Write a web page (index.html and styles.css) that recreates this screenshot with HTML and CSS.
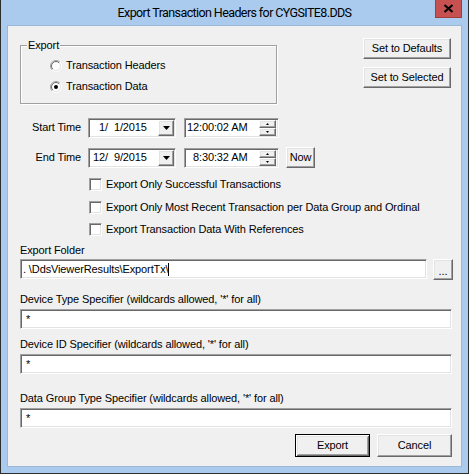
FILE: index.html
```html
<!DOCTYPE html>
<html>
<head>
<meta charset="utf-8">
<link rel="stylesheet" href="styles.css">
</head>
<body>
<div class="window">
  <div class="titlebar">
    <div class="title">Export Transaction Headers for CYGSITE8.DDS</div>
    <div class="close"><svg width="11" height="9" viewBox="0 0 11 9"><path d="M1.5 1 L9.5 8 M9.5 1 L1.5 8" stroke="#000" stroke-width="2.2"/></svg></div>
  </div>
  <div class="client">
    <div class="top">
      <div class="group">
        <span class="legend">Export</span>
        <div class="radio-row">
          <svg class="rb" width="12" height="12" viewBox="0 0 12 12">
            <defs>
              <linearGradient id="go" x1="0" y1="0" x2="1" y2="1"><stop offset="0.5" stop-color="#a0a0a0"/><stop offset="0.5" stop-color="#ffffff"/></linearGradient>
              <linearGradient id="gi" x1="0" y1="0" x2="1" y2="1"><stop offset="0.5" stop-color="#696969"/><stop offset="0.5" stop-color="#e3e3e3"/></linearGradient>
            </defs>
            <circle cx="6" cy="6" r="5.5" fill="none" stroke="url(#go)" stroke-width="1"/>
            <circle cx="6" cy="6" r="4.5" fill="#fff" stroke="url(#gi)" stroke-width="1"/>
          </svg>
          <span>Transaction Headers</span>
        </div>
        <div class="radio-row">
          <svg class="rb" width="12" height="12" viewBox="0 0 12 12">
            <circle cx="6" cy="6" r="5.5" fill="none" stroke="url(#go)" stroke-width="1"/>
            <circle cx="6" cy="6" r="4.5" fill="#fff" stroke="url(#gi)" stroke-width="1"/>
            <circle cx="6" cy="6" r="2" fill="#000"/>
          </svg>
          <span>Transaction Data</span>
        </div>
      </div>
      <div class="side-buttons">
        <div class="btn side-btn">Set to Defaults</div>
        <div class="btn side-btn">Set to Selected</div>
      </div>
    </div>

    <div class="time-row first">
      <div class="row-label">Start Time</div>
      <div class="field date"><span class="val"><span class="f2">1</span>/<span class="f2">1</span>/2015</span><span class="btn drop"><svg width="7" height="4" viewBox="0 0 7 4"><path d="M0 0 H7 L3.5 4 Z" fill="#000"/></svg></span></div>
      <div class="field time"><span class="val"><span class="f2">12</span>:00:02 AM</span><span class="spin"><span class="btn sp"><svg width="3" height="2" viewBox="0 0 3 2"><path d="M1.5 0 L3 2 H0 Z" fill="#000"/></svg></span><span class="btn sp"><svg width="3" height="2" viewBox="0 0 3 2"><path d="M0 0 H3 L1.5 2 Z" fill="#000"/></svg></span></span></div>
    </div>
    <div class="time-row second">
      <div class="row-label">End Time</div>
      <div class="field date"><span class="val"><span class="f2">12</span>/<span class="f2">9</span>/2015</span><span class="btn drop"><svg width="7" height="4" viewBox="0 0 7 4"><path d="M0 0 H7 L3.5 4 Z" fill="#000"/></svg></span></div>
      <div class="field time"><span class="val"><span class="f2">8</span>:30:32 AM</span><span class="spin"><span class="btn sp"><svg width="3" height="2" viewBox="0 0 3 2"><path d="M1.5 0 L3 2 H0 Z" fill="#000"/></svg></span><span class="btn sp"><svg width="3" height="2" viewBox="0 0 3 2"><path d="M0 0 H3 L1.5 2 Z" fill="#000"/></svg></span></span></div>
      <div class="btn now">Now</div>
    </div>

    <div class="checks">
      <div class="check-row"><span class="cb"></span><span>Export Only Successful Transactions</span></div>
      <div class="check-row"><span class="cb"></span><span>Export Only Most Recent Transaction per Data Group and Ordinal</span></div>
      <div class="check-row"><span class="cb"></span><span>Export Transaction Data With References</span></div>
    </div>

    <div class="label lbl-folder">Export Folder</div>
    <div class="folder-row">
      <div class="field text folder"><span>. \DdsViewerResults\ExportTx\</span><span class="caret"></span></div>
      <div class="btn browse">...</div>
    </div>

    <div class="label lbl-spec1">Device Type Specifier (wildcards allowed, '*' for all)</div>
    <div class="field text wide">*</div>

    <div class="label lbl-spec2">Device ID Specifier (wildcards allowed, '*' for all)</div>
    <div class="field text wide">*</div>

    <div class="label lbl-spec3">Data Group Type Specifier (wildcards allowed, '*' for all)</div>
    <div class="field text wide">*</div>

    <div class="actions">
      <div class="btn default">Export</div>
      <div class="btn cancel">Cancel</div>
    </div>
  </div>
</div>
</body>
</html>
```

FILE: styles.css
```css
* { box-sizing: border-box; }
html, body { margin: 0; padding: 0; }
body {
  width: 469px;
  height: 474px;
  overflow: hidden;
  font-family: "Liberation Sans", Arial, sans-serif;
  font-size: 11px;
  letter-spacing: -0.12px;
  color: #000;
  background: #ffffff;
}
.window {
  position: relative;
  width: 469px;
  height: 474px;
  background: #aacbee;
  border: 1px solid #2d2d2d;
  border-top: none;
  display: flex;
  flex-direction: column;
}
.titlebar {
  height: 26px;
  display: flex;
  align-items: center;
  justify-content: center;
}
.title {
  font-family: Roboto, "Liberation Sans", sans-serif;
  font-size: 12.5px;
  letter-spacing: -0.6px;
  color: #000;
  margin-top: -1px;
}
.close {
  position: absolute;
  top: 0;
  right: 6px;
  width: 27px;
  height: 18px;
  background: #c75050;
  border: 1px solid #a13d3d;
  border-top: none;
  display: flex;
  align-items: center;
  justify-content: center;
}
.client {
  margin: 0 7px;
  height: 440px;
  background: #f0f0f0;
  box-shadow: 0 0 0 1px #9cb8d6;
  padding: 0 8px 0 12px;
  display: flex;
  flex-direction: column;
  line-height: 13px;
}
.top {
  display: flex;
  margin-top: 12px;
}
.group {
  position: relative;
  margin-top: 7px;
  width: 257px;
  height: 59px;
  border: 1px solid #a0a0a0;
  box-shadow: inset 1px 1px #fff, 1px 1px #fff;
  padding: 9px 0 0 29px;
}
.legend {
  position: absolute;
  top: -7px;
  left: 6px;
  padding: 0 1px;
  background: #f0f0f0;
}
.radio-row {
  display: flex;
  align-items: center;
  height: 21px;
  gap: 4px;
}
.rb { display: block; flex: none; }
.side-buttons {
  margin-left: auto;
  margin-right: 2px;
  display: flex;
  flex-direction: column;
  gap: 8px;
}
.btn {
  background: #f0f0f0;
  border: 1px solid;
  border-color: #fff #696969 #696969 #fff;
  box-shadow: inset -1px -1px #a0a0a0, inset 1px 1px #e3e3e3;
  display: flex;
  align-items: center;
  justify-content: center;
}
.side-btn {
  width: 88px;
  height: 21px;
}
.time-row {
  display: flex;
  align-items: center;
  height: 21px;
}
.time-row.first { margin-top: 13px; }
.time-row.second { margin-top: 9px; }
.row-label {
  width: 63px;
  text-align: right;
  padding-right: 2px;
  margin-right: 5px;
}
.field {
  background: #fff;
  border: 1px solid;
  border-color: #a0a0a0 #fff #fff #a0a0a0;
  box-shadow: inset 1px 1px #696969, inset -1px -1px #e3e3e3;
  padding: 1px;
}
.date {
  width: 88px;
  height: 20px;
  display: flex;
  align-items: center;
}
.date .val { padding-left: 3px; flex: 1; }
.f2 { display: inline-block; width: 12px; text-align: right; }
.drop {
  width: 16px;
  height: 16px;
  flex: none;
}
.drop svg { display: block; }
.time {
  margin-left: 8px;
  width: 95px;
  height: 20px;
  display: flex;
  align-items: center;
}
.time .val { padding-left: 1px; flex: 1; }
.spin {
  display: flex;
  flex-direction: column;
  width: 17px;
  height: 16px;
  margin-right: 1px;
}
.sp {
  height: 8px;
}
.sp svg { display: block; }
.now {
  margin-left: 7px;
  width: 29px;
  height: 21px;
}
.checks {
  margin-top: 10px;
  padding-left: 69px;
  display: flex;
  flex-direction: column;
  gap: 9.5px;
}
.check-row {
  display: flex;
  align-items: center;
  gap: 4px;
  height: 13px;
}
.cb {
  width: 13px;
  height: 13px;
  flex: none;
  background: #fff;
  border: 1px solid;
  border-color: #a0a0a0 #fff #fff #a0a0a0;
  box-shadow: inset 1px 1px #696969, inset -1px -1px #e3e3e3;
}
.label {
  height: 13px;
}
.lbl-folder { margin-top: 8px; }
.lbl-spec1 { margin-top: 13px; }
.lbl-spec2 { margin-top: 9px; }
.lbl-spec3 { margin-top: 18px; }
.folder-row {
  margin-top: 2px;
  display: flex;
  gap: 6px;
}
.text {
  height: 20px;
  display: flex;
  align-items: center;
  padding-left: 5px;
}
.folder { width: 407px; padding-left: 2px; }
.caret {
  width: 1px;
  height: 13px;
  background: #000;
}
.browse {
  width: 20px;
  height: 21px;
  align-items: flex-end;
  padding-bottom: 3px;
  line-height: 10px;
}
.wide {
  margin-top: 3px;
  width: 432px;
}
.actions {
  margin-top: 6px;
  display: flex;
  justify-content: flex-end;
  gap: 7px;
  padding-right: 1px;
}
.actions .btn {
  width: 75px;
  height: 23px;
}
.btn.default {
  border: 1px solid #000;
  box-shadow: inset 1px 1px #fff, inset -1px -1px #696969, inset 2px 2px #e3e3e3, inset -2px -2px #a0a0a0;
}
```
